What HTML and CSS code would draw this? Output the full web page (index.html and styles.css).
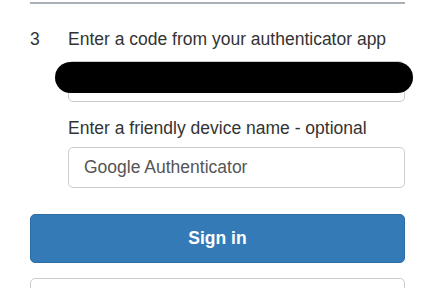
FILE: index.html
```html
<!DOCTYPE html>
<html>
<head>
<meta charset="utf-8">
<link rel="stylesheet" href="styles.css">
</head>
<body>
<div class="page">
  <div class="rule"></div>
  <div class="step">
    <div class="step-num">3</div>
    <div class="step-body">
      <div class="label">Enter a code from your authenticator app</div>
      <div class="field field-code">
        <div class="redact"></div>
      </div>
      <div class="label label-second">Enter a friendly device name - optional</div>
      <div class="field field-name">Google Authenticator</div>
    </div>
  </div>
  <button class="btn-primary">Sign in</button>
  <div class="btn-secondary"></div>
</div>
</body>
</html>
```
FILE: styles.css
```css
html, body {
  margin: 0;
  padding: 0;
  background: #fff;
}
body {
  font-family: "Liberation Sans", Arial, Helvetica, sans-serif;
  font-size: 17.5px;
  color: #333;
  overflow: hidden;
}
.page {
  width: 375px;
  margin-left: 30px;
  padding-top: 2px;
}
.rule {
  height: 2px;
  background: #aab0b7;
}
.step {
  display: flex;
  margin-top: 23px;
}
.step-num {
  width: 38px;
  flex: none;
  line-height: 25px;
}
.step-body {
  width: 337px;
}
.label {
  line-height: 25px;
  white-space: nowrap;
}
.label-second {
  margin-top: 14px;
}
.field {
  box-sizing: border-box;
  height: 41px;
  border: 1px solid #ccc;
  border-radius: 5px;
  background: #fff;
}
.field-code {
  position: relative;
  margin-top: 9px;
}
.redact {
  position: absolute;
  left: -14px;
  top: 0px;
  width: 358px;
  height: 31px;
  border-radius: 16px;
  background: #000;
}
.field-name {
  margin-top: 6px;
  padding: 0 15px;
  line-height: 39px;
  color: #555;
}
.btn-primary {
  display: block;
  box-sizing: border-box;
  width: 375px;
  height: 49px;
  margin-top: 26px;
  border: 1px solid #2e6da4;
  border-radius: 5px;
  background: #337ab7;
  color: #fff;
  font-family: "Liberation Sans", Arial, Helvetica, sans-serif;
  font-size: 17.5px;
  font-weight: bold;
  padding: 0;
}
.btn-secondary {
  box-sizing: border-box;
  width: 375px;
  height: 49px;
  margin-top: 15px;
  border: 1px solid #ccc;
  border-radius: 5px;
}
```
